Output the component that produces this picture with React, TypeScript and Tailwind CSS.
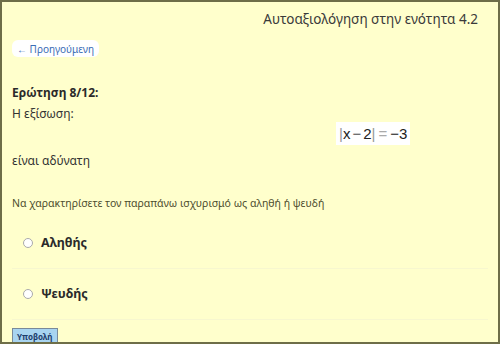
import React from 'react';

const OPTIONS = ['Αληθής', 'Ψευδής'];

export default function App() {
  return (
    <div className="h-[344px] w-[500px] overflow-hidden border-2 border-[#6e6e48] bg-[#ffffcc] font-['Noto_Sans',sans-serif] text-[#333]">
      {/* Header */}
      <div className="flex justify-end pr-[20px] pt-[8px]">
        <h1 className="text-[13.5px] leading-[18px] text-[#3a3a3a]">Αυτοαξιολόγηση στην ενότητα 4.2</h1>
      </div>

      <div className="px-[10px]">
        <button className="mt-[12px] flex h-[17px] items-center rounded-[6px] bg-white px-[5px] text-[10px] leading-[12px] text-[#3b6db5]">
          ← Προηγούμενη
        </button>

        {/* Question */}
        <div className="text-[12px] leading-[14px]">
          <h2 className="mt-[29px] font-bold text-[#2a2a2a]">Ερώτηση 8/12:</h2>
          <p className="mt-[7px]">Η εξίσωση:</p>
          <div className="ml-[324px] mt-[1px] inline-flex h-[23px] items-center bg-white px-[3px] font-['Liberation_Sans',sans-serif] text-[15px] leading-[18px] text-[#222]">
            <span className="text-[#999]">|</span>
            <span>x</span>
            <span className="mx-[2px] text-[#555]">−</span>
            <span>2</span>
            <span className="text-[#999]">|</span>
            <span className="mx-[3px] text-[#aaa]">=</span>
            <span>−3</span>
          </div>
          <p className="mt-[9px]">είναι αδύνατη</p>
          <p className="mt-[29px] text-[10.5px] leading-[12px] text-[#4d4d2e]">
            Να χαρακτηρίσετε τον παραπάνω ισχυρισμό ως αληθή ή ψευδή
          </p>
        </div>

        {/* Options */}
        <div className="mt-[9px]">
          {OPTIONS.map((opt) => (
            <label
              key={opt}
              className="flex h-[51px] items-center gap-[8px] border-b border-[#f7f7cf] pl-[11px] text-[12.5px] font-bold text-[#2a2a2a]"
            >
              <span className="h-[10px] w-[10px] rounded-full border border-[#aaa] bg-white" />
              {opt}
            </label>
          ))}
        </div>

        <button className="mt-[8px] border border-[#7a8a99] bg-[#a8d4f0] px-[4px] py-[3px] text-[8px] font-bold leading-[10px] text-[#1d3c6b]">
          Υποβολή
        </button>
      </div>
    </div>
  );
}
